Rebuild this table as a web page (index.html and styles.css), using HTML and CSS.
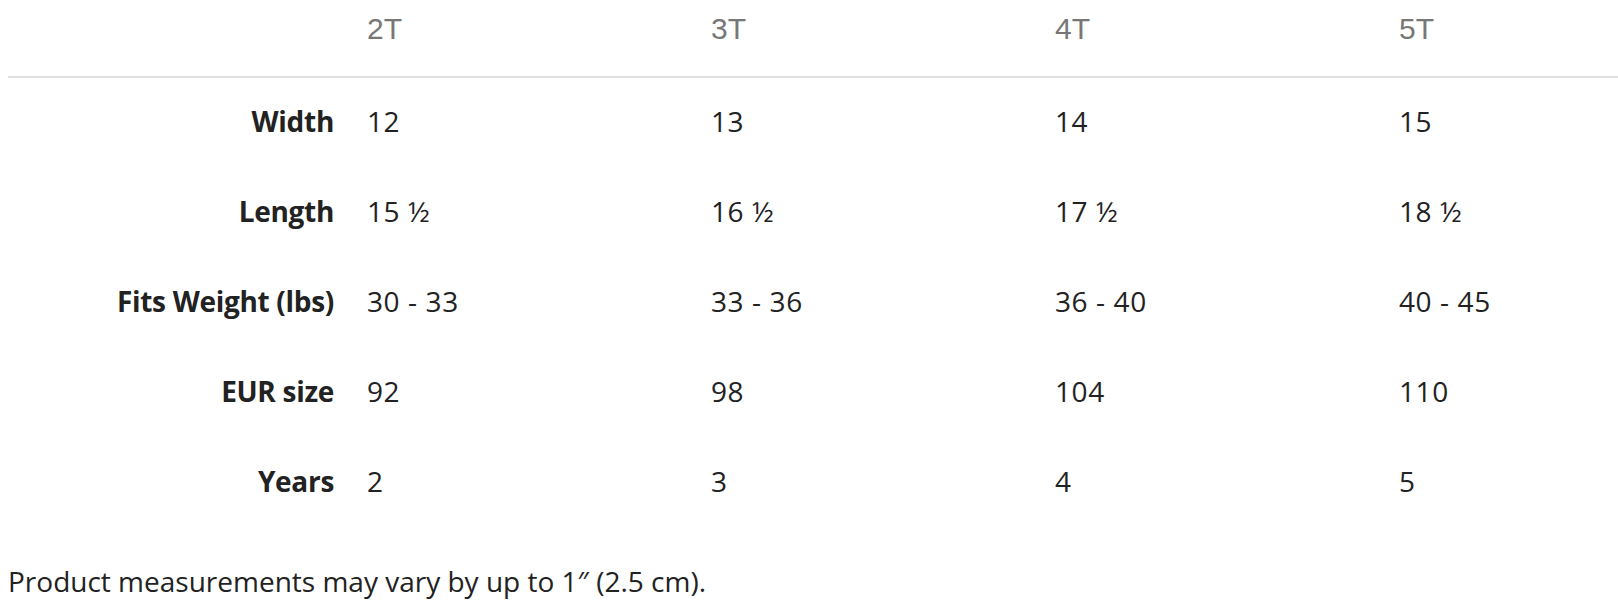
FILE: index.html
```html
<!DOCTYPE html>
<html lang="en">
<head>
<meta charset="utf-8">
<title>Size chart</title>
<link rel="stylesheet" href="styles.css">
</head>
<body>
<table class="size-table">
  <colgroup>
    <col class="col-label">
    <col class="col-size">
    <col class="col-size">
    <col class="col-size">
    <col>
  </colgroup>
  <thead>
    <tr>
      <th></th>
      <th>2T</th>
      <th>3T</th>
      <th>4T</th>
      <th>5T</th>
    </tr>
  </thead>
  <tbody>
    <tr><th>Width</th><td>12</td><td>13</td><td>14</td><td>15</td></tr>
    <tr><th>Length</th><td>15 ½</td><td>16 ½</td><td>17 ½</td><td>18 ½</td></tr>
    <tr><th>Fits Weight (lbs)</th><td>30 - 33</td><td>33 - 36</td><td>36 - 40</td><td>40 - 45</td></tr>
    <tr><th>EUR size</th><td>92</td><td>98</td><td>104</td><td>110</td></tr>
    <tr><th>Years</th><td>2</td><td>3</td><td>4</td><td>5</td></tr>
  </tbody>
</table>
<p class="note">Product measurements may vary by up to 1″ (2.5 cm).</p>
</body>
</html>
```
FILE: styles.css
```css
html, body {
  background: #fff;
}
body {
  margin: 0 0 0 8px;
  font-family: "Open Sans", "Liberation Sans", sans-serif;
  color: #222;
}
.size-table {
  border-collapse: collapse;
  width: 100%;
  table-layout: fixed;
}
.col-label { width: 359px; }
.col-size { width: 344px; }
.size-table thead th {
  font-family: "Liberation Sans", sans-serif;
  font-weight: normal;
  font-size: 30px;
  color: #777;
  text-align: left;
  height: 76px;
  padding: 0;
  vertical-align: top;
  line-height: 58px;
  border-bottom: 2px solid #dedede;
}
.size-table tbody tr {
  height: 90px;
}
.size-table tbody th,
.size-table tbody td {
  padding: 0 0 3px;
  font-size: 28px;
  line-height: 32px;
  vertical-align: middle;
  text-align: left;
}
.size-table tbody td {
  letter-spacing: 0.6px;
}
.size-table tbody th {
  font-weight: 700;
  text-align: right;
  padding-right: 33px;
  letter-spacing: -0.3px;
}
.note {
  margin: 34px 0 0;
  font-size: 28px;
  line-height: 40px;
}
```
